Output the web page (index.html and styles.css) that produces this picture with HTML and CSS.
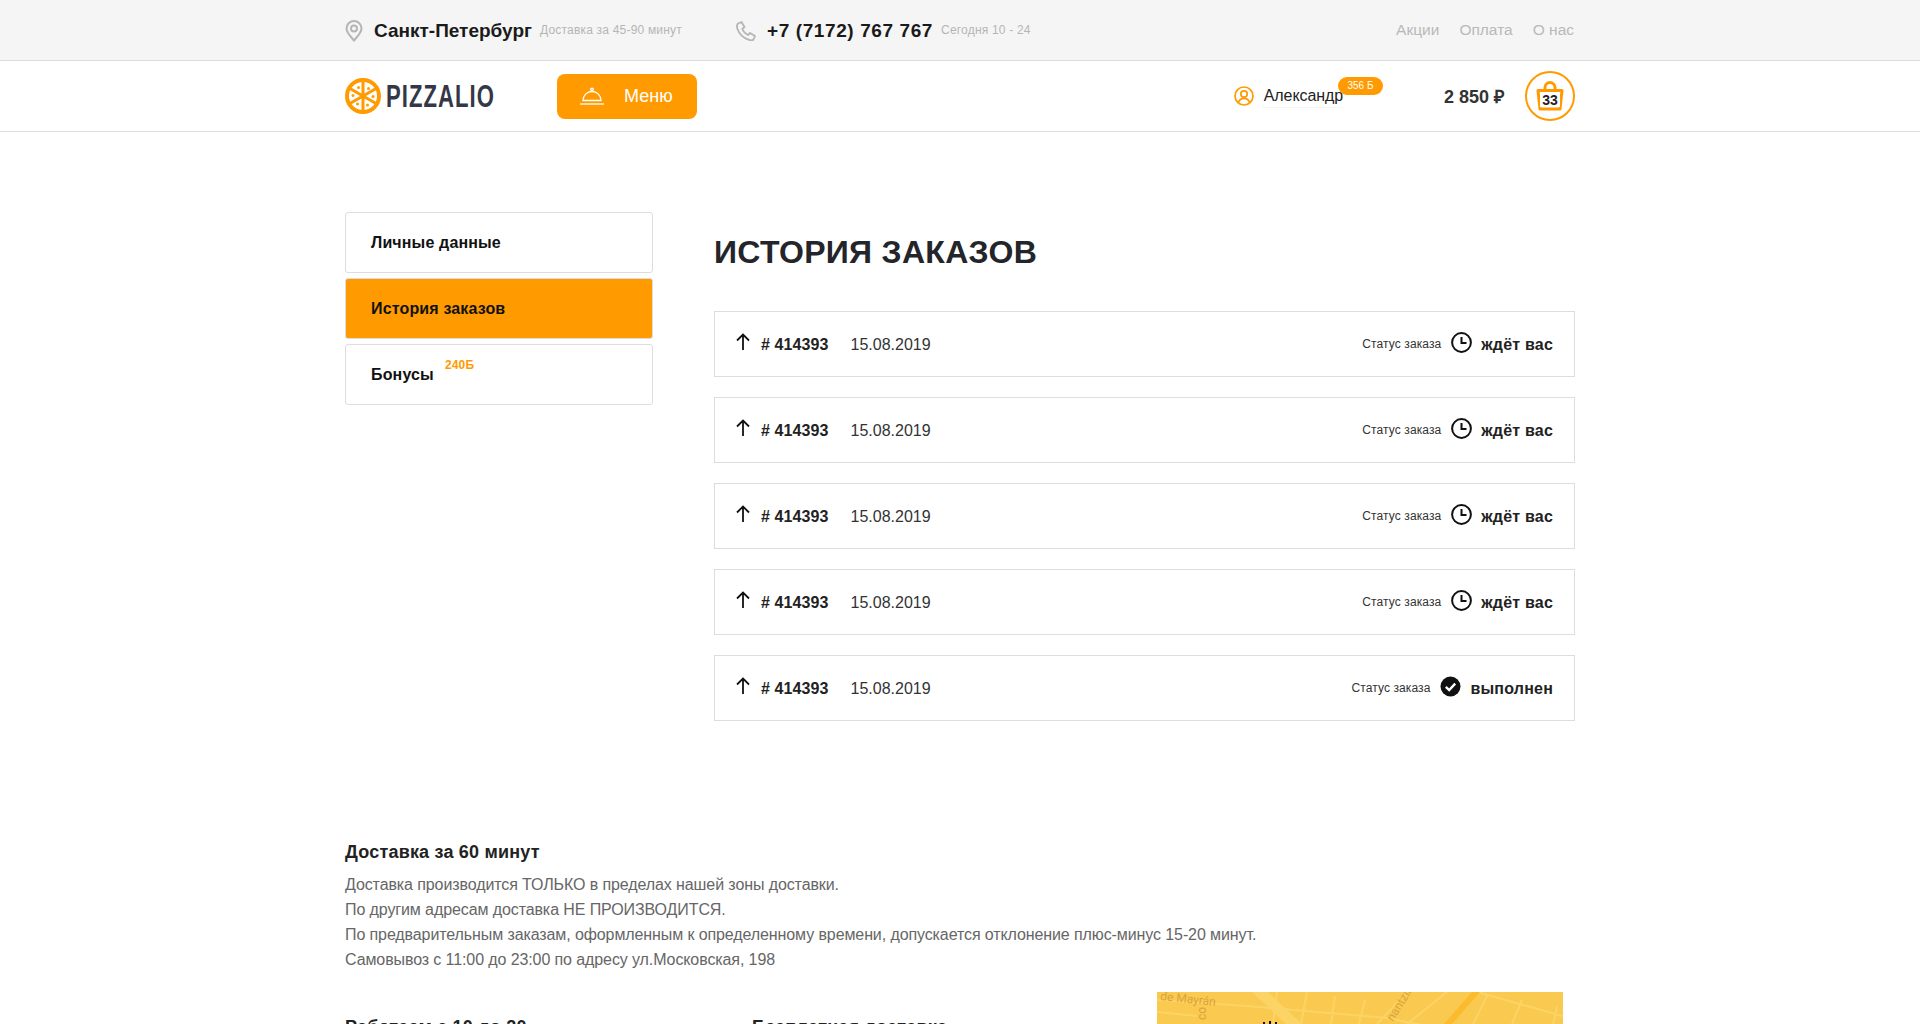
FILE: index.html
```html
<!DOCTYPE html>
<html lang="ru">
<head>
    <meta charset="utf-8">
    <title>Pizzalio - История заказов</title>
    <link rel="stylesheet" href="styles.css">
</head>
<body>
    <!-- верхняя полоса -->
    <div class="topbar">
        <div class="container topbar-inner">
            <div class="top-city">
                <svg class="top-icon" width="18" height="22" viewBox="0 0 18 22" fill="none" stroke="#b5b5b5" stroke-width="2"><path d="M9 20.500C5 16 1.500 12.500 1.500 8.500a7.500 7.500 0 0 1 15 0C16.500 12.500 13 16 9 20.500z"/><circle cx="9" cy="8.500" r="3"/></svg>
                <span class="top-strong">Санкт-Петербург</span>
                <span class="top-note">Доставка за 45-90 минут</span>
            </div>
            <div class="top-phone">
                <svg class="top-icon" width="20" height="20" viewBox="0 0 20 20" fill="none" stroke="#b5b5b5" stroke-width="1.800" stroke-linejoin="round"><path d="M2 2.500 5.500 1l3 5-2.200 2c1 2.500 3 4.700 5.700 6l2-2 5 3-1.500 3.500c-1 1-3 1-5 .2C7.500 17 3 12.500 1.300 7.500.7 5.500 1 3.500 2 2.500z"/></svg>
                <span class="top-strong top-tel">+7 (7172) 767 767</span>
                <span class="top-note">Сегодня 10 - 24</span>
            </div>
            <div class="top-links">
                <a>Акции</a>
                <a>Оплата</a>
                <a>О нас</a>
            </div>
        </div>
    </div>

    <!-- шапка -->
    <div class="header">
        <div class="container header-inner">
            <div class="logo">
                <svg width="36" height="36" viewBox="0 0 36 36" fill="none"><circle cx="18" cy="18" r="16" stroke="#ff9b00" stroke-width="4"/><g stroke="#ff9b00" stroke-width="3"><path d="M18 2v32M4 10l28 16M4 26l28-16"/></g><g fill="#ff9b00"><circle cx="13.500" cy="9.500" r="1.500"/><circle cx="23.500" cy="10.500" r="1.500"/><circle cx="28" cy="18.500" r="1.500"/><circle cx="22.500" cy="27" r="1.500"/><circle cx="12.500" cy="26" r="1.500"/><circle cx="8" cy="17.500" r="1.500"/></g></svg>
                <span class="logo-text">PIZZALIO</span>
            </div>
            <a class="menu-btn">
                <svg width="24" height="20" viewBox="0 0 24 20" fill="none" stroke="#fff" stroke-width="1.300"><path d="M3 14.500a9 9 0 0 1 18 0z"/><path d="M0 18h24"/><circle cx="12" cy="3.500" r="1.300"/></svg>
                <span>Меню</span>
            </a>
            <div class="user">
                <svg width="20" height="20" viewBox="0 0 20 20" fill="none" stroke="#ff9b00" stroke-width="1.700"><circle cx="10" cy="10" r="9"/><circle cx="10" cy="8" r="3.200"/><path d="M4.500 16.500c.8-3 3-4.200 5.500-4.200s4.700 1.200 5.500 4.200"/></svg>
                <span class="user-name">Александр</span>
                <span class="user-badge">356 Б</span>
            </div>
            <div class="cart-sum">2 850 ₽</div>
            <div class="cart">
                <svg width="28" height="30" viewBox="0 0 28 30" fill="none" stroke="#ff9b00" stroke-width="3" stroke-linejoin="round"><path d="M2 9.500h24l-2 18.500H4z"/><path d="M9 11V6.500a5 5 0 0 1 10 0V11"/></svg>
                <span class="cart-count">33</span>
            </div>
        </div>
    </div>

    <div class="container cabinet">
        <div class="side-menu">
            <a class="side-item">Личные данные</a>
            <a class="side-item active">История заказов</a>
            <a class="side-item">Бонусы <span class="side-bonus">240Б</span></a>
        </div>
        <div class="orders">
            <h1 class="page-title">ИСТОРИЯ ЗАКАЗОВ</h1>

            <div class="order-row">
                <svg class="order-arrow" width="14" height="17" viewBox="0 0 14 17" fill="none" stroke="#111" stroke-width="1.800"><path d="M7 17V1.500M1 7.500l6-6 6 6"/></svg>
                <span class="order-num"># 414393</span>
                <span class="order-date">15.08.2019</span>
                <span class="order-label">Статус заказа</span>
                <svg class="order-icon" width="21" height="21" viewBox="0 0 21 21" fill="none" stroke="#111" stroke-width="2"><circle cx="10.500" cy="10.500" r="9.400"/><path d="M10.500 5v6h5"/></svg>
                <span class="order-status">ждёт вас</span>
            </div>
            <div class="order-row">
                <svg class="order-arrow" width="14" height="17" viewBox="0 0 14 17" fill="none" stroke="#111" stroke-width="1.800"><path d="M7 17V1.500M1 7.500l6-6 6 6"/></svg>
                <span class="order-num"># 414393</span>
                <span class="order-date">15.08.2019</span>
                <span class="order-label">Статус заказа</span>
                <svg class="order-icon" width="21" height="21" viewBox="0 0 21 21" fill="none" stroke="#111" stroke-width="2"><circle cx="10.500" cy="10.500" r="9.400"/><path d="M10.500 5v6h5"/></svg>
                <span class="order-status">ждёт вас</span>
            </div>
            <div class="order-row">
                <svg class="order-arrow" width="14" height="17" viewBox="0 0 14 17" fill="none" stroke="#111" stroke-width="1.800"><path d="M7 17V1.500M1 7.500l6-6 6 6"/></svg>
                <span class="order-num"># 414393</span>
                <span class="order-date">15.08.2019</span>
                <span class="order-label">Статус заказа</span>
                <svg class="order-icon" width="21" height="21" viewBox="0 0 21 21" fill="none" stroke="#111" stroke-width="2"><circle cx="10.500" cy="10.500" r="9.400"/><path d="M10.500 5v6h5"/></svg>
                <span class="order-status">ждёт вас</span>
            </div>
            <div class="order-row">
                <svg class="order-arrow" width="14" height="17" viewBox="0 0 14 17" fill="none" stroke="#111" stroke-width="1.800"><path d="M7 17V1.500M1 7.500l6-6 6 6"/></svg>
                <span class="order-num"># 414393</span>
                <span class="order-date">15.08.2019</span>
                <span class="order-label">Статус заказа</span>
                <svg class="order-icon" width="21" height="21" viewBox="0 0 21 21" fill="none" stroke="#111" stroke-width="2"><circle cx="10.500" cy="10.500" r="9.400"/><path d="M10.500 5v6h5"/></svg>
                <span class="order-status">ждёт вас</span>
            </div>
            <div class="order-row">
                <svg class="order-arrow" width="14" height="17" viewBox="0 0 14 17" fill="none" stroke="#111" stroke-width="1.800"><path d="M7 17V1.500M1 7.500l6-6 6 6"/></svg>
                <span class="order-num"># 414393</span>
                <span class="order-date">15.08.2019</span>
                <span class="order-label">Статус заказа</span>
                <svg class="order-icon" width="21" height="21" viewBox="0 0 21 21"><circle cx="10.500" cy="10.500" r="10" fill="#111"/><path d="M5.800 10.800l3.400 3.200 6-6.300" fill="none" stroke="#fff" stroke-width="2.400"/></svg>
                <span class="order-status">выполнен</span>
            </div>
        </div>
    </div>

    <!-- информация о доставке -->
    <div class="container delivery">
        <h3 class="delivery-title">Доставка за 60 минут</h3>
        <p class="delivery-text">
            Доставка производится ТОЛЬКО в пределах нашей зоны доставки.<br>
            По другим адресам доставка НЕ ПРОИЗВОДИТСЯ.<br>
            По предварительным заказам, оформленным к определенному времени, допускается отклонение плюс-минус 15-20 минут.<br>
            Самовывоз с 11:00 до 23:00 по адресу ул.Московская, 198
        </p>
        <div class="delivery-bottom">
            <h3 class="delivery-col">Работаем с 10 до 20</h3>
            <h3 class="delivery-col">Бесплатная доставка</h3>
            <div class="map">
                <svg width="406" height="32" viewBox="0 0 406 32" fill="none">
                    <g stroke="#fcd466" stroke-width="2">
                        <path d="M0 8 90 14 230 26 300 40M0 20l40 4M120 0l-4 32M150 0l-6 32M178 4l-4 28M208 8l-6 24M250 0l-30 32M290 0l-40 32M330 4l-14 28M365 8l-10 24M400 14l-4 18M320 0l86 24"/>
                    </g>
                    <path d="M95 0l34 32h16L111 0z" fill="#fcd466"/>
                    <path d="M315 0l-28 32h8L323 0z" fill="#fbbb2c"/>
                    <text class="map-label" x="3" y="8" transform="rotate(6 3 8)">de Mayrán</text>
                    <text class="map-label" x="49" y="28" transform="rotate(-90 49 28)">co</text>
                    <text class="map-label" x="236" y="30" transform="rotate(-58 236 30)">nantzin</text>
                    <path d="M106 32v-2h2v2zM112 32v-3h2v3zM118 32v-2h2v2z" fill="#111"/>
                </svg>
            </div>
        </div>
    </div>
</body>
</html>
```

FILE: styles.css
```css
body {
    font-family: "Liberation Sans", Arial, sans-serif;
    margin: 0;
    padding: 0;
    background-color: #fff;
    color: #222;
}
h1, h3, p {
    margin: 0;
}
.container {
    width: 1230px;
    margin: 0 auto;
}

/* верхняя полоса */
.topbar {
    height: 60px;
    background: #f5f5f5;
    border-bottom: 1px solid #ddd;
}
.topbar-inner {
    height: 60px;
    padding-top: 2px;
    box-sizing: border-box;
    display: flex;
    align-items: center;
}
.top-city, .top-phone {
    display: flex;
    align-items: center;
}
.top-phone {
    margin-left: 54px;
}
.top-icon {
    margin-right: 11px;
}
.top-strong {
    font-size: 19px;
    font-weight: bold;
    color: #1a1a1a;
}
.top-tel {
    letter-spacing: .6px;
}
.top-note {
    font-size: 12px;
    letter-spacing: .2px;
    color: #b5b5b5;
    margin: -2px 0 0 8px;
}
.top-links {
    margin: -2px 1px 0 auto;
    display: flex;
    gap: 20px;
    font-size: 15.500px;
    color: #b9b9b9;
}

/* шапка */
.header {
    height: 70px;
    border-bottom: 1px solid #ddd;
}
.header-inner {
    height: 70px;
    display: flex;
    align-items: center;
}
.logo {
    width: 212px;
    display: flex;
    align-items: center;
    gap: 5px;
}
.logo-text {
    font-size: 32px;
    font-weight: bold;
    letter-spacing: 1.500px;
    color: #343846;
    transform: scaleX(.69);
    transform-origin: left center;
}
.menu-btn {
    width: 140px;
    height: 45px;
    box-sizing: border-box;
    padding-left: 23px;
    background: #ff9b00;
    border-radius: 8px;
    color: #fff;
    font-size: 18px;
    display: flex;
    align-items: center;
    gap: 20px;
}
.user {
    margin-left: auto;
    display: flex;
    align-items: center;
    position: relative;
}
.user-name {
    margin: 3px 0 0 10px;
    font-size: 16px;
    letter-spacing: -.1px;
    color: #222;
    padding-bottom: 2px;
    border-bottom: 1px solid #f5f5f5;
}
.user-badge {
    position: absolute;
    right: -40px;
    top: -7px;
    width: 45px;
    height: 18px;
    line-height: 18px;
    border-radius: 9px;
    background: #ff9b00;
    color: #fff;
    font-size: 10px;
    text-align: center;
}
.cart-sum {
    margin-left: 101px;
    font-size: 18px;
    font-weight: bold;
    color: #333;
}
.cart {
    margin-left: 21px;
    width: 50px;
    height: 50px;
    box-sizing: border-box;
    border: 2px solid #ff9b00;
    border-radius: 50%;
    display: flex;
    align-items: center;
    justify-content: center;
    position: relative;
}
.cart-count {
    position: absolute;
    left: 13px;
    top: 20px;
    width: 20px;
    background: #fff;
    font-size: 14px;
    font-weight: bold;
    line-height: 14px;
    text-align: center;
    color: #222;
}

/* кабинет */
.cabinet {
    display: flex;
    padding-top: 80px;
}
.side-menu {
    width: 308px;
    display: flex;
    flex-direction: column;
    gap: 5px;
}
.side-item {
    height: 61px;
    box-sizing: border-box;
    padding-left: 25px;
    border: 1px solid #ddd;
    border-radius: 3px;
    font-size: 16px;
    font-weight: bold;
    letter-spacing: .15px;
    color: #111;
    display: flex;
    align-items: center;
    gap: 11px;
    position: relative;
}
.side-item.active {
    background: #ff9b00;
}
.side-bonus {
    font-size: 12px;
    color: #ff9b00;
    margin-top: -20px;
}
.orders {
    margin-left: 61px;
    flex: 1;
}
.page-title {
    font-size: 32px;
    line-height: 38px;
    letter-spacing: .3px;
    color: #24252a;
    padding-top: 21px;
    margin-bottom: 40px;
}
.order-row {
    height: 66px;
    box-sizing: border-box;
    border: 1px solid #ddd;
    padding: 2px 21px 0;
    margin-bottom: 20px;
    display: flex;
    align-items: center;
}
.order-arrow {
    margin-top: -7px;
}
.order-num {
    margin-left: 11px;
    font-size: 16px;
    font-weight: bold;
    letter-spacing: .1px;
    color: #222;
}
.order-date {
    margin-left: 22px;
    font-size: 16px;
    color: #333;
}
.order-label {
    margin: -2px 0 0 auto;
    font-size: 12px;
    letter-spacing: .1px;
    color: #333;
}
.order-icon {
    margin: -6px 0 0 10px;
}
.order-status {
    margin-left: 9px;
    font-size: 16px;
    font-weight: bold;
    letter-spacing: .2px;
    color: #222;
}

/* доставка */
.delivery {
    padding-top: 100px;
}
.delivery-title {
    font-size: 18px;
    line-height: 22px;
    letter-spacing: .2px;
    color: #222;
    margin-bottom: 9px;
}
.delivery-text {
    font-size: 16px;
    line-height: 25px;
    letter-spacing: -.1px;
    color: #666;
}
.delivery-bottom {
    display: grid;
    grid-template-columns: 407px 405px 406px;
    margin-top: 20px;
}
.delivery-col {
    padding-top: 24px;
    font-size: 18px;
    line-height: 22px;
    letter-spacing: .2px;
    color: #222;
}
.map {
    height: 260px;
    background: #f9c950;
}
.map svg {
    display: block;
}
.map-label {
    font-family: Roboto, sans-serif;
    font-size: 12px;
    fill: #d9a53c;
}
```
